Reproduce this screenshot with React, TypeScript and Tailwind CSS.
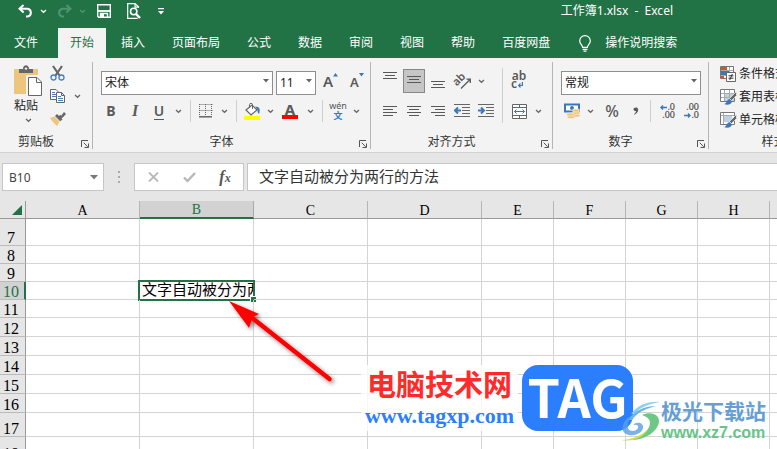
import React from "react";

const uiFont = "font-['Noto_Sans','Noto_Sans_CJK_SC',sans-serif]";

function Chevron() {
  return (
    <svg width="7" height="5" viewBox="0 0 7 5" fill="none" aria-hidden="true">
      <path d="M1 1l2.5 2.3L6 1" stroke="currentColor" strokeWidth="1.3" />
    </svg>
  );
}

function MoreButton({ label }: { label: string }) {
  return (
    <button aria-label={label} className="flex h-6 w-3.5 items-center justify-center text-[#666]">
      <Chevron />
    </button>
  );
}

function Tool({ label, wide, children }: { label: string; wide?: boolean; children: React.ReactNode }) {
  return (
    <button
      aria-label={label}
      className={`flex h-6 shrink-0 items-center justify-center text-[#5a5a5a] ${wide ? "w-6" : "w-[22px]"}`}
    >
      {children}
    </button>
  );
}

function Divider() {
  return (
    <div className="flex w-2.5 shrink-0 justify-center">
      <div className="h-[22px] w-px bg-[#cfcfcf]" />
    </div>
  );
}

function Triangle() {
  return (
    <svg width="6" height="4" viewBox="0 0 6 4" aria-hidden="true">
      <path d="M0 0h6L3 3.6z" fill="#666" />
    </svg>
  );
}

function Combo({ label, options, className }: { label: string; options: string[]; className: string }) {
  return (
    <div className={`relative h-6 ${className}`}>
      <select
        aria-label={label}
        defaultValue={options[0]}
        className="h-6 w-full appearance-none border border-[#8f8f8f] bg-white pl-[3px] text-xs leading-5 text-[#222]"
      >
        {options.map((o) => (
          <option key={o}>{o}</option>
        ))}
      </select>
      <div className="pointer-events-none absolute inset-y-0 right-1 flex items-center">
        <Triangle />
      </div>
    </div>
  );
}

function Launcher({ label }: { label: string }) {
  return (
    <button aria-label={label} className="absolute right-[3px] bottom-0 h-2.5 w-2">
      <svg width="8" height="8" viewBox="0 0 8 8" fill="none" stroke="#555">
        <path d="M.5 7V.5H7" />
        <path d="M2.7 2.7l4 4M7.5 3.5v4h-4" />
      </svg>
    </button>
  );
}

function Group({
  title,
  className,
  launcher = true,
  children,
}: {
  title: string;
  className: string;
  launcher?: boolean;
  children: React.ReactNode;
}) {
  return (
    <section
      aria-label={title}
      className={`relative flex h-[87px] shrink-0 flex-col justify-between border-r border-[#b5b5b5] ${className}`}
    >
      {children}
      <div className="pr-5 text-center text-xs leading-3.5 text-[#333]">{title}</div>
      {launcher && <Launcher label={`${title}设置`} />}
    </section>
  );
}

function Lines({ rows }: { rows: [number, number, number][] }) {
  return (
    <svg width="16" height="20" viewBox="0 0 16 20" stroke="#595959" aria-hidden="true">
      {rows.map(([x1, x2, y]) => (
        <path key={y} d={`M${x1} ${y}.5H${x2}`} />
      ))}
    </svg>
  );
}

function IndentIcon({ out }: { out?: boolean }) {
  return (
    <svg width="16" height="14" viewBox="0 0 16 14" fill="none" aria-hidden="true">
      <path d="M0 .5h16M8 3.5h8M8 6.5h8M8 9.5h8M0 12.5h16" stroke="#666" />
      {out ? (
        <path d="M7 6.5H2M4 3.5L1 6.5l3 3" stroke="#3c78b4" strokeWidth="2" />
      ) : (
        <path d="M0 6.5h5M3 3.5l3 3-3 3" stroke="#3c78b4" strokeWidth="2" />
      )}
    </svg>
  );
}

function QuickAccess() {
  return (
    <div className="flex items-center text-white">
      <button aria-label="撤消" className="w-[15px]">
        <svg width="15" height="14" viewBox="0 0 15 14" fill="none" stroke="currentColor" strokeWidth="2">
          <path d="M5.5 1L1.500 4.800l4.200 3.700M2 4.800h7.500a4 3.900 0 0 1 0 7.700H8" />
        </svg>
      </button>
      <button aria-label="撤消选项" className="flex w-5 justify-center">
        <Chevron />
      </button>
      <button aria-label="恢复" className="w-[23px] pl-1 text-[#4f9470]">
        <svg width="15" height="14" viewBox="0 0 15 14" fill="none" stroke="currentColor" strokeWidth="2">
          <path d="M9.500 1l4 3.800-4.200 3.700M13 4.800H5.500a4 3.900 0 0 0 0 7.700H7" />
        </svg>
      </button>
      <button aria-label="恢复选项" className="flex w-3 items-center justify-center text-[#4f9470]">
        <Chevron />
      </button>
      <button aria-label="保存" className="w-[23px]">
        <svg width="14" height="14" viewBox="0 0 14 14" className="ml-auto" fill="none" stroke="currentColor">
          <path d="M.7.7h12.600v12.600H1.700L.7 12.300z" strokeWidth="1.400" />
          <path d="M1 7h12" strokeWidth="1.800" />
          <path d="M3.500 13V9.500h7V13" strokeWidth="1.400" />
          <path d="M4 10h3v3H4z" fill="currentColor" stroke="none" />
        </svg>
      </button>
      <button aria-label="打印预览" className="w-[30px]">
        <svg width="14" height="16" viewBox="0 0 14 16" className="ml-auto" fill="none" stroke="currentColor">
          <path d="M11.500 5V3.800L8 .6H.7v14.800h10M8 .6v3.600h3.500" strokeWidth="1.200" />
          <circle cx="6.700" cy="8.500" r="3.200" strokeWidth="1.600" />
          <path d="M9 11l4 4" strokeWidth="2.400" />
        </svg>
      </button>
      <button aria-label="自定义快速访问工具栏" className="w-[23px]">
        <svg width="6" height="7" viewBox="0 0 6 7" className="ml-auto" fill="currentColor">
          <path d="M0 0h6v1.200H0zM0 3h6L3 6.500z" />
        </svg>
      </button>
    </div>
  );
}

const menus = ["开始", "插入", "页面布局", "公式", "数据", "审阅", "视图", "帮助", "百度网盘"];

function TopBar() {
  return (
    <header className="shrink-0 bg-[#217346] text-xs text-white">
      <div className="flex h-7 items-start justify-between pr-[104px] pl-[18px]">
        <div className="flex h-[22px] items-center">
          <QuickAccess />
        </div>
        <h1 className="leading-[22px] whitespace-pre">工作簿1.xlsx  -  Excel</h1>
      </div>
      <nav className="flex h-[30px] gap-[3px] whitespace-nowrap">
        <button className="w-[55px] pr-[3px]">文件</button>
        {menus.map((m, i) => (
          <button key={m} className={i === 0 ? "bg-[#f3f3f3] px-3 text-[#217346]" : "px-3"}>
            {m}
          </button>
        ))}
        <button className="flex items-center gap-3.5 pl-3.5">
          <svg width="12" height="17" viewBox="0 0 12 17" fill="none" stroke="currentColor" strokeWidth="1.200">
            <path d="M3.600 12.300c0-2.300-2.900-3.200-2.900-6.400a5.300 5.300 0 0 1 10.600 0c0 3.200-2.900 4.100-2.900 6.400zM3.600 14.300h4.800M4.500 16.200h3" />
          </svg>
          操作说明搜索
        </button>
      </nav>
    </header>
  );
}

function ClipboardGroup() {
  return (
    <Group title="剪贴板" className="w-[93px]">
      <div className="flex pl-3.5">
        <button className="flex w-7 flex-col items-start text-xs leading-4 text-[#222]">
          <svg width="28" height="36" viewBox="0 0 28 36" fill="none">
            <path d="M0 7h24v25H0z" fill="#eec57c" />
            <path d="M5 11V7h4c0-5 6-5 6 0h4v4z" fill="#666" />
            <circle cx="12" cy="6.600" r="1.200" fill="#f3f3f3" />
            <path d="M13.500 14.500h10l5 5v14h-15z" fill="#fff" stroke="#f3f3f3" strokeWidth="3" />
            <path d="M14.500 15.500H23l4.500 4.500v13.500h-13zM22.500 15.500v5h5" fill="#fff" stroke="#666" />
          </svg>
          粘贴
          <span className="flex h-3 w-7 items-center justify-center text-[#666]">
            <Chevron />
          </span>
        </button>
        <div className="flex flex-col pl-2">
          <button aria-label="剪切" className="flex h-[22px] w-4 items-center">
            <svg width="15" height="16" viewBox="0 0 15 16" fill="none">
              <path d="M3 1l6.500 9.500M12 1L5.500 10.500" stroke="#666" strokeWidth="2.200" />
              <circle cx="3.500" cy="12.500" r="2.500" stroke="#4480bb" strokeWidth="1.300" />
              <circle cx="11.500" cy="12.500" r="2.500" stroke="#4480bb" strokeWidth="1.300" />
            </svg>
          </button>
          <div className="flex h-6 items-center">
            <button aria-label="复制" className="w-5">
              <svg width="15" height="14" viewBox="0 0 15 14" fill="#fff" stroke="#666">
                <path d="M.500.500H6L8.500 3v7.500h-8z" />
                <path d="M2 3.500h3M2 5.500h4M2 7.500h4" stroke="#4480bb" />
                <path d="M6.500 3.500h5l3 3v7h-8zM11.500 3.500v3h3" />
                <path d="M8 7.500h3M8 9.500h5M8 11.500h5" stroke="#4480bb" />
              </svg>
            </button>
            <MoreButton label="复制选项" />
          </div>
          <button aria-label="格式刷" className="flex h-[22px] w-4 items-center">
            <svg width="16" height="14" viewBox="0 0 16 14">
              <path d="M0 6l4.500-1.500 5 5L7 14C4 11.500 2 9 0 6z" fill="#eec57c" />
              <path d="M5 4l2-2 2 2 1.200-1.200 1 .9L14 0l2 2-3 3.200-1.500 1 1 1.300-2.300 1.800z" fill="#666" />
            </svg>
          </button>
        </div>
      </div>
    </Group>
  );
}

function FontGroup() {
  return (
    <Group title="字体" className="w-[278px]">
      <div>
        <div className="flex gap-[3px] pt-[7px] pl-2">
          <Combo label="字体名称" options={["宋体", "黑体", "楷体"]} className="w-[172px]" />
          <Combo label="字号" options={["11", "12", "14"]} className="w-10" />
          <button aria-label="增大字号" className="ml-1 flex h-6 w-5 items-center">
            <span className="text-[15px] leading-4 font-semibold text-[#595959]">A</span>
            <svg width="5" height="16" viewBox="0 0 5 16">
              <path d="M0 3.500L2.500 0 5 3.500z" fill="#3c78b4" />
            </svg>
          </button>
          <button aria-label="减小字号" className="ml-1 flex h-6 w-5 items-center">
            <span className="pt-0.5 text-[13px] leading-4 font-semibold text-[#595959]">A</span>
            <svg width="5" height="16" viewBox="0 0 5 16">
              <path d="M0 0h5L2.500 3.500z" fill="#3c78b4" />
            </svg>
          </button>
        </div>
        <div className="flex items-center pt-1.5 pl-1.5 text-sm">
          <Tool label="加粗" wide>
            <b>B</b>
          </Tool>
          <Tool label="倾斜" wide>
            <i className="font-['Liberation_Serif'] text-base font-bold">I</i>
          </Tool>
          <Tool label="下划线" wide>
            <span className="border-b border-[#595959] leading-4 font-semibold">U</span>
          </Tool>
          <MoreButton label="下划线选项" />
          <Divider />
          <Tool label="边框">
            <svg width="14" height="14" viewBox="0 0 14 14" fill="none" stroke="#666">
              <path d="M.500.500h13M.500 6.500h13M.500 0v12M6.500 0v12M12.500 0v12" strokeDasharray="1 1" />
              <path d="M0 12.800h13" strokeWidth="1.500" />
            </svg>
          </Tool>
          <MoreButton label="边框选项" />
          <Divider />
          <Tool label="填充颜色">
            <svg width="17" height="17" viewBox="0 0 17 17" fill="none">
              <path d="M2 7l6-5 5 5-6 5z" fill="#fff" stroke="#666" strokeWidth="1.200" />
              <path d="M5.500 5V1.500c0-1.500 3-1.500 3 0V6" stroke="#666" />
              <path d="M11 3.500c5 0 5.500 3 4 7.500-1.500-1-1.500-3-1.500-4z" fill="#3c78b4" />
              <path d="M0 13h16v4H0z" fill="#ff0" />
            </svg>
          </Tool>
          <MoreButton label="填充颜色选项" />
          <button aria-label="字体颜色" className="flex h-6 w-[26px] flex-col items-center pt-1">
            <span className="text-[15px] leading-3 font-bold text-[#595959]">A</span>
            <span className="h-1 w-4 bg-[#f00]" />
          </button>
          <MoreButton label="字体颜色选项" />
          <Divider />
          <button aria-label="拼音指南" className="flex h-6 w-[22px] flex-col items-center pt-0.5 text-[#555]">
            <span className="text-[9px] leading-[10px]">wén</span>
            <span className="text-[9px] leading-[10px] font-bold text-[#3c78b4]">文</span>
          </button>
          <MoreButton label="拼音指南选项" />
        </div>
      </div>
    </Group>
  );
}

function AlignGroup() {
  return (
    <Group title="对齐方式" className="w-[182px]">
      <div className="flex">
        <div className="flex w-[126px] flex-col gap-1.5 pt-[7px] pl-[7px]">
          <div className="flex">
            <Tool label="顶端对齐" wide>
              <Lines rows={[[1, 15, 1], [3, 13, 4], [1, 15, 7]]} />
            </Tool>
            <button
              aria-label="垂直居中"
              aria-pressed="true"
              className="mx-px flex h-6 w-[22px] items-center justify-center border border-[#888] bg-[#c6c6c6]"
            >
              <Lines rows={[[1, 15, 5], [3, 13, 8], [1, 15, 11]]} />
            </button>
            <Tool label="底端对齐" wide>
              <Lines rows={[[1, 15, 10], [3, 13, 13], [1, 15, 16]]} />
            </Tool>
            <button aria-label="方向" className="relative flex h-6 w-6 items-center justify-center text-[#595959]">
              <svg width="17" height="18" viewBox="0 0 17 18" fill="none" stroke="currentColor">
                <path d="M7 16.500l9-9M12.500 7.200h3.800V11" strokeWidth="1.300" />
              </svg>
              <span className="absolute top-1 left-0.5 -rotate-45 text-[11px] leading-3 font-semibold">ab</span>
            </button>
            <MoreButton label="方向选项" />
          </div>
          <div className="flex">
            <Tool label="左对齐" wide>
              <Lines rows={[[1, 15, 5], [1, 11, 8], [1, 15, 11], [1, 11, 14]]} />
            </Tool>
            <Tool label="居中" wide>
              <Lines rows={[[1, 15, 5], [3, 13, 8], [1, 15, 11], [3, 13, 14]]} />
            </Tool>
            <Tool label="右对齐" wide>
              <Lines rows={[[1, 15, 5], [5, 15, 8], [1, 15, 11], [5, 15, 14]]} />
            </Tool>
            <Tool label="减少缩进量" wide>
              <IndentIcon out />
            </Tool>
            <Tool label="增加缩进量" wide>
              <IndentIcon />
            </Tool>
          </div>
        </div>
        <div className="mt-1.5 ml-[5px] h-[55px] w-px bg-[#cfcfcf]" />
        <div className="flex flex-col gap-1.5 pt-[7px] pl-1">
          <button
            aria-label="自动换行"
            className="flex h-6 w-6 flex-col justify-center pr-1 pb-0.5 pl-1 text-xs leading-2 font-semibold text-[#595959]"
          >
            <span>ab</span>
            <span className="flex items-end gap-px">
              c
              <svg width="5" height="6" viewBox="0 0 5 6" fill="none" stroke="#3c78b4" strokeWidth="1.200">
                <path d="M4.400 0v3.500H1M2.500 1.500l-2 2 2 2" />
              </svg>
            </span>
          </button>
          <div className="flex">
            <Tool label="合并后居中" wide>
              <svg width="15" height="15" viewBox="0 0 15 15" fill="#fff" stroke="#666">
                <path d="M.500.500h14v14H.500zM.500 3.500h14M.500 11.500h14M7.500.500v3M7.500 11.500v3" />
                <path d="M2.500 7.500h10M4.500 5.500l-2 2 2 2M10.500 5.500l2 2-2 2" stroke="#3c78b4" fill="none" />
              </svg>
            </Tool>
            <MoreButton label="合并选项" />
          </div>
        </div>
      </div>
    </Group>
  );
}

function DecimalArrow({ right }: { right?: boolean }) {
  return (
    <svg width="7" height="5" viewBox="0 0 7 5" fill="none" stroke="#3c78b4" strokeWidth="1.400" aria-hidden="true">
      <path d={right ? "M0 2.500h6M4 .500l2 2-2 2" : "M7 2.500H1M3 .500l-2 2 2 2"} />
    </svg>
  );
}

function DecimalButton({ label, less }: { label: string; less?: boolean }) {
  return (
    <button
      aria-label={label}
      className="flex h-6 w-6 flex-col items-end justify-center pr-1 text-[9px] leading-2 font-medium text-[#444]"
    >
      <span className="flex items-center">
        {!less && <DecimalArrow />}
        {less ? ".00" : ".0"}
      </span>
      <span className="flex items-center">
        {less && <DecimalArrow right />}
        {less ? ".0" : ".00"}
      </span>
    </button>
  );
}

function NumberGroup() {
  return (
    <Group title="数字" className="w-[156px]">
      <div className="pt-[7px] pl-2">
        <Combo label="数字格式" options={["常规", "数值", "货币"]} className="w-[140px]" />
        <div className="flex items-center pt-1.5">
          <Tool label="会计数字格式">
            <svg width="16" height="16" viewBox="0 0 16 16" fill="none">
              <path d="M1 1.500h14v7H1z" fill="#fff" stroke="#3c78b4" strokeWidth="2" />
              <circle cx="8" cy="5" r="2" fill="#3c78b4" />
              <path d="M9 6h6v6H9z" fill="#f3f3f3" />
              <g fill="#eec57c" stroke="#f3f3f3" strokeWidth=".6">
                <ellipse cx="12" cy="12.500" rx="4" ry="1.600" />
                <ellipse cx="12" cy="10" rx="4" ry="1.600" />
                <ellipse cx="12" cy="7.500" rx="4" ry="1.600" />
                <ellipse cx="7" cy="14" rx="4" ry="1.600" />
                <ellipse cx="6.500" cy="11.500" rx="4" ry="1.600" />
              </g>
            </svg>
          </Tool>
          <MoreButton label="会计格式选项" />
          <button aria-label="百分比样式" className="h-6 w-[30px] text-base leading-6 font-medium text-[#595959]">
            %
          </button>
          <button aria-label="千位分隔样式" className="flex h-6 w-[18px] items-center justify-center">
            <svg width="6" height="8" viewBox="0 0 6 8">
              <path d="M1 7.800C3 6.800 5.500 5 5.200 2.500 5-.5.500 0 .500 2.300c0 1.500 1.500 2 2.500 1.700 0 1.500-1 2.300-2 3z" fill="#595959" />
            </svg>
          </button>
          <Divider />
          <DecimalButton label="增加小数位数" />
          <DecimalButton label="减少小数位数" less />
        </div>
      </div>
    </Group>
  );
}

function StyleIcon({ kind }: { kind: number }) {
  return (
    <svg width="17" height="16" viewBox="0 0 17 16" fill="none">
      {kind === 0 ? (
        <>
          <path d="M.500.500h13v12H.500z" fill="#fff" stroke="#777" />
          <path d="M1 1h6v3H1zM1 10h3v3H1z" fill="#d35230" />
          <path d="M1 5h8v4H1z" fill="#3c78b4" />
          <path d="M1 4.500h12M1 9.500h12M9.500 1v12" stroke="#aaa" />
          <path d="M6.500 6.500h9v9h-9z" fill="#fff" stroke="#666" />
          <path d="M8.500 9.800h5M8.500 12.200h5M12.300 8l-2.600 6" stroke="#333" />
        </>
      ) : (
        <>
          <path d="M.500.500h14v12H.500z" fill="#fff" stroke="#777" />
          <path d={kind === 1 ? "M5 4h9v8H5z" : "M4 4h8v6H4z"} fill="#bcd0e6" />
          <path
            d={kind === 1 ? "M1 4.500h13M1 8.500h13M4.500 1v11M9.500 1v11" : "M1 3.500h13M3.500 1v11"}
            stroke="#aaa"
          />
          <path d="M16.500 2.500v4l-5 5-2-2z" fill="#666" stroke="#fff" strokeWidth=".6" />
          <path d="M4 15c3-.5 2-4 5.500-5l2.500 2.500C11 16 7 16.500 4 15z" fill="#3c78b4" />
        </>
      )}
    </svg>
  );
}

function StylesGroup() {
  return (
    <Group title="样式" className="w-[150px]" launcher={false}>
      <div className="flex flex-col pl-[11px]">
        {["条件格式", "套用表格格式", "单元格样式"].map((t, i) => (
          <button key={t} className="flex h-[23px] items-center gap-0.5 text-xs whitespace-nowrap text-[#222]">
            <StyleIcon kind={i} />
            {t}
          </button>
        ))}
      </div>
    </Group>
  );
}

function FormulaBar() {
  return (
    <div className="flex h-12 shrink-0 items-center bg-[#e6e6e6] pl-0.5">
      <div className="relative">
        <input
          aria-label="名称框"
          defaultValue="B10"
          className="block h-7 w-[102px] border border-[#c6c6c6] bg-white pl-1.5 text-xs text-[#444]"
        />
        <button aria-label="名称列表" className="absolute inset-y-0 right-1.5">
          <svg width="8" height="5" viewBox="0 0 8 5">
            <path d="M0 0h8L4 4.500z" fill="#777" />
          </svg>
        </button>
      </div>
      <div className="flex w-[30px] flex-col items-center gap-[3px]">
        <i className="size-0.5 bg-[#aaa]" />
        <i className="size-0.5 bg-[#aaa]" />
        <i className="size-0.5 bg-[#aaa]" />
      </div>
      <div className="flex h-7 w-[110px] items-center border border-[#c6c6c6] bg-white">
        <button aria-label="取消" className="flex flex-1 justify-center">
          <svg width="11" height="10" viewBox="0 0 11 10" stroke="#b8b8b8" strokeWidth="1.800">
            <path d="M1 .500l9 9M10 .500l-9 9" />
          </svg>
        </button>
        <button aria-label="输入" className="flex flex-1 justify-center">
          <svg width="13" height="11" viewBox="0 0 13 11" fill="none" stroke="#b8b8b8" strokeWidth="2.400">
            <path d="M1 5.500l3.500 3.500L12 1" />
          </svg>
        </button>
        <button
          aria-label="插入函数"
          className="flex-1 font-['Liberation_Serif',serif] text-base leading-6 font-bold text-[#555] italic"
        >
          f<span className="text-xs">x</span>
        </button>
      </div>
      <input
        aria-label="编辑栏"
        defaultValue="文字自动被分为两行的方法"
        className="ml-[3px] h-7 min-w-0 flex-1 border border-r-0 border-[#c6c6c6] bg-white pb-1 pl-[11px] text-[15px] text-[#333]"
      />
    </div>
  );
}

const columns = ["A", "B", "C", "D", "E", "F", "G", "H", "I"];
const rowHeights: [number, string][] = [
  [7, "h-[27px]"],
  [8, "h-[18px]"],
  [9, "h-[18px]"],
  [10, "h-[18px]"],
  [11, "h-[18px]"],
  [12, "h-[19px]"],
  [13, "h-[19px]"],
  [14, "h-[19px]"],
  [15, "h-[19px]"],
  [16, "h-[19px]"],
  [17, "h-6"],
  [18, "h-[25px]"],
];

function Sheet() {
  return (
    <table className="w-[842px] table-fixed border-separate border-spacing-0 bg-white font-['Liberation_Serif','Noto_Sans_CJK_SC',serif]">
      <colgroup>
        <col className="w-[26px]" />
        {columns.map((c, i) => (
          <col key={c} className={i < 4 ? "w-[114px]" : "w-[72px]"} />
        ))}
      </colgroup>
      <thead>
        <tr className="h-[18px] bg-[#e6e6e6] text-sm leading-3.5 text-black">
          <th aria-label="全选" className="border-r border-b border-[#999] p-0">
            <svg width="10" height="10" viewBox="0 0 10 10" className="ml-3">
              <path d="M10 0v10H0z" fill="#217346" />
            </svg>
          </th>
          {columns.map((c) => (
            <th
              key={c}
              scope="col"
              className={
                c === "B"
                  ? "border-r border-b-2 border-r-[#aaa] border-b-[#217346] bg-[#d2d2d2] p-0 pt-0.5 font-normal text-[#217346]"
                  : "border-r border-b border-r-[#b5b5b5] border-b-[#999] p-0 pt-[3px] font-normal"
              }
            >
              {c}
            </th>
          ))}
        </tr>
      </thead>
      <tbody>
        {rowHeights.map(([n, h]) => (
          <tr key={n} className={h}>
            <th
              scope="row"
              className={
                n === 10
                  ? "border-r-2 border-b border-r-[#217346] border-b-[#bbb] bg-[#d2d2d2] p-0 pr-0.5 align-bottom text-base leading-[15px] font-normal text-[#217346]"
                  : "border-r border-b border-r-[#999] border-b-[#bbb] bg-[#e6e6e6] p-0 pr-[3px] align-bottom text-base leading-[15px] font-normal text-black"
              }
            >
              {n}
            </th>
            {columns.map((c) => (
              <td key={c} className="relative border-r border-b border-[#d4d4d4] p-0">
                {n === 10 && c === "B" && (
                  <div className="absolute -inset-x-0.5 -inset-y-0.5 border-2 border-[#217346] bg-white">
                    <div className="overflow-hidden pl-0.5 text-[15px] leading-[17px] whitespace-nowrap text-black">
                      文字自动被分为两行的方法
                    </div>
                    <span className="absolute -right-[3px] -bottom-[3px] size-1.5 border-t border-l border-white bg-[#217346]" />
                  </div>
                )}
              </td>
            ))}
          </tr>
        ))}
      </tbody>
    </table>
  );
}

function Arrow() {
  return (
    <svg
      width="120"
      height="96"
      viewBox="0 0 120 96"
      className="pointer-events-none absolute top-[94px] left-[224px]"
      aria-hidden="true"
    >
      <defs>
        <filter id="shade" x="-20%" y="-20%" width="140%" height="140%">
          <feDropShadow dx="2" dy="2" stdDeviation="2" floodColor="#000" floodOpacity=".5" />
        </filter>
      </defs>
      <g filter="url(#shade)" fill="#f00">
        <path d="M5 6l30 13-6.500 3.500L25 33z" />
        <path d="M27 22l78.500 62" stroke="#f00" strokeWidth="4.500" strokeLinecap="round" />
      </g>
    </svg>
  );
}

function TagLogo() {
  return (
    <div className="pointer-events-none absolute top-[164px] left-[361px] flex gap-1">
      <div className="flex h-[66px] w-[157px] flex-col items-center bg-white/80 whitespace-nowrap">
        <span className="font-['Noto_Sans_CJK_SC'] text-[29px] leading-9 font-bold text-[#ff2a2a]">电脑技术网</span>
        <span className="font-['Liberation_Serif',serif] text-[22px] leading-[30px] font-semibold text-[#2b7fff]">
          www.tagxp.com
        </span>
      </div>
      <div className="flex h-[66px] w-[111px] items-center justify-center rounded-2xl bg-[#2b7fff] pb-1 font-['Noto_Sans_CJK_SC',sans-serif] text-[52px] leading-none font-bold text-white">
        TAG
      </div>
    </div>
  );
}

function AuroraLogo() {
  return (
    <div className="pointer-events-none absolute top-[197px] left-[620px] flex items-center gap-px">
      <svg width="40" height="43" viewBox="0 0 40 43" aria-hidden="true">
        <path d="M11 14C18 5 28 1 40 2 29 4 21 7 15 13z" fill="#8fd0ef" />
        <path d="M8 20C14 11 24 6 36 6 24 9 17 13 12 20z" fill="#69b4e8" />
        <path d="M9 17C2 22 0 31 6 34c6 3 16 0 17-6 1-5-6-7-10-3 3-1 6 0 5 3-2 4-9 4-10 0-1-3 0-7 3-11z" fill="#5a9fe0" opacity=".8" />
        <path d="M22 15c8-4 17-1 17 6 0 9-13 19-27 19 10-4 18-10 18-17 0-4-3-6-8-8z" fill="#6cc884" />
        <path d="M1 40c10 0 20-4 27-11-5 9-15 13-27 11z" fill="#cfe04f" />
      </svg>
      <div className="whitespace-nowrap">
        <div className="font-['Noto_Sans_CJK_SC'] text-[21px] leading-6 font-bold text-[#659fd6]">极光下载站</div>
        <div className="font-['Liberation_Sans',sans-serif] text-base leading-[22px] font-bold text-[#67c488]">
          www.xz7.com
        </div>
      </div>
    </div>
  );
}

export default function App() {
  return (
    <div className={`flex h-screen w-full flex-col overflow-hidden bg-white ${uiFont}`}>
      <TopBar />
      <div className="flex h-[95px] shrink-0 overflow-hidden border-b border-[#d2d2d2] bg-[#f3f3f3] pt-1">
        <ClipboardGroup />
        <FontGroup />
        <AlignGroup />
        <NumberGroup />
        <StylesGroup />
      </div>
      <FormulaBar />
      <main className="relative min-h-0 flex-1 overflow-hidden">
        <Sheet />
        <Arrow />
        <TagLogo />
        <AuroraLogo />
      </main>
    </div>
  );
}
